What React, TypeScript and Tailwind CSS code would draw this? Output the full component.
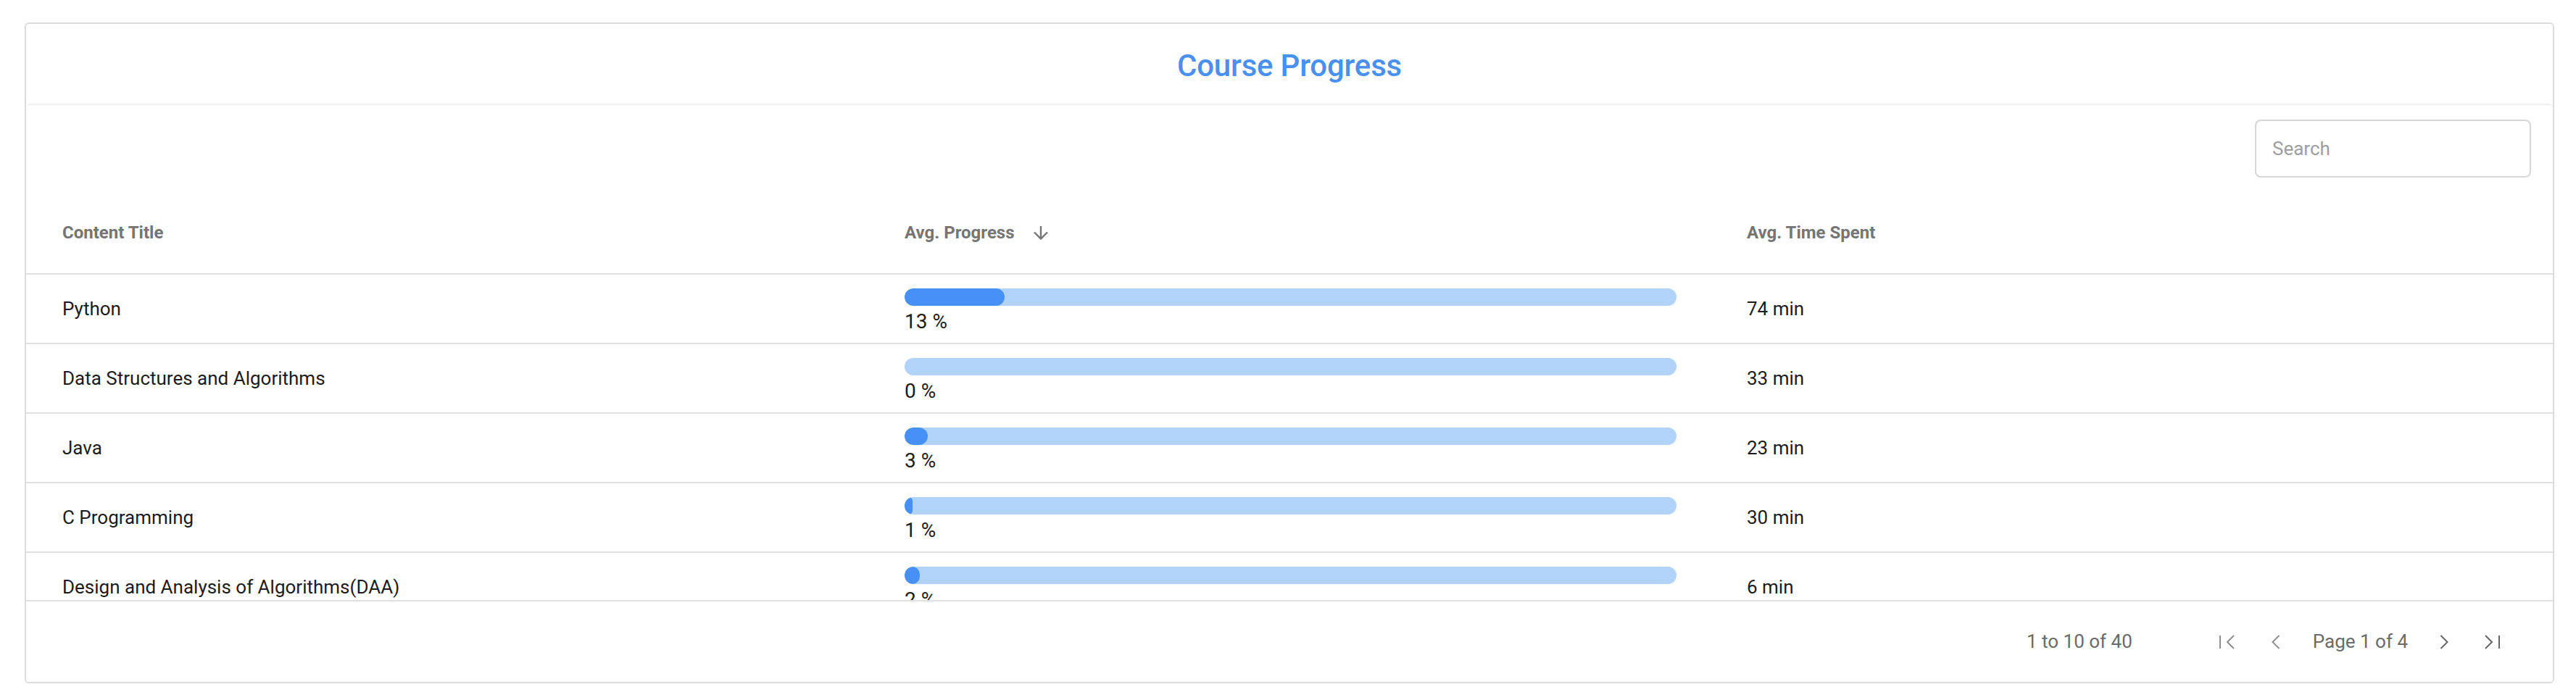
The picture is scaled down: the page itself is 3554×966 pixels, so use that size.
import React from "react";

interface CourseRow {
  title: string;
  progress: number;
  time: string;
}

const rows: CourseRow[] = [
  { title: "Python", progress: 13, time: "74 min" },
  { title: "Data Structures and Algorithms", progress: 0, time: "33 min" },
  { title: "Java", progress: 3, time: "23 min" },
  { title: "C Programming", progress: 1, time: "30 min" },
  { title: "Design and Analysis of Algorithms(DAA)", progress: 2, time: "6 min" },
];

function SortDownIcon() {
  return (
    <svg width="24" height="20" viewBox="0 0 24 20" fill="none" stroke="#757575" strokeWidth="2.4">
      <path d="M12 1v17" />
      <path d="M3 9.5l9 9 9-9" />
    </svg>
  );
}

function PagerIcon({ kind }: { kind: "first" | "prev" | "next" | "last" }) {
  const color = kind === "first" || kind === "prev" ? "#8f8f8f" : "#666666";
  return (
    <svg width="24" height="24" viewBox="0 0 24 24" fill="none" stroke={color} strokeWidth="2">
      {kind === "first" && (
        <>
          <path d="M2 3v18" />
          <path d="M21 3l-9 9 9 9" />
        </>
      )}
      {kind === "prev" && <path d="M16.5 3l-9 9 9 9" />}
      {kind === "next" && <path d="M7.5 3l9 9-9 9" />}
      {kind === "last" && (
        <>
          <path d="M3 3l9 9-9 9" />
          <path d="M22 3v18" />
        </>
      )}
    </svg>
  );
}

function ProgressCell({ value }: { value: number }) {
  return (
    <div className="flex flex-col pt-[19px] pl-[50px] pr-[47px] h-full">
      <div className="h-[24px] w-full rounded-full bg-[#b1d3f9] overflow-hidden">
        <div className="h-full rounded-full bg-[#4690f7]" style={{ width: `${value}%` }} />
      </div>
      <span className="mt-[6px] text-[28px] leading-[32px] text-[#1c1c1c]">{value} %</span>
    </div>
  );
}

export default function App() {
  return (
    <div className="bg-white min-h-screen pt-[31px] pl-[34px] pr-[30px] font-['Roboto',sans-serif]">
      <div className="h-[912px] flex flex-col border-2 border-[#dcdce0] rounded-[6px] bg-white overflow-hidden">
        <div className="h-[110px] flex items-center justify-center pt-[5px]">
          <h1 className="text-[42px] font-medium text-[#4a90f2] tracking-[-0.2px]">Course Progress</h1>
        </div>

        <div className="flex-1 flex flex-col border-t-2 border-[#efefef] rounded-t-[6px]">
          <div className="flex justify-end pt-[20px] pb-[20px] pr-[30px]">
            <input
              placeholder="Search"
              className="w-[381px] h-[80px] rounded-[8px] border-2 border-[#d6d6d6] pl-[22px] text-[26px] text-[#333] placeholder:text-[#9e9e9e] outline-none"
            />
          </div>

          <div className="grid grid-cols-3 h-[114px] border-b-2 border-[#e0e0e0] text-[24px] font-bold text-[#757575]">
            <div className="flex items-center pl-[50px]">Content Title</div>
            <div className="flex items-center pl-[50px] gap-[24px]">
              <span>Avg. Progress</span>
              <SortDownIcon />
            </div>
            <div className="flex items-center pl-[50px]">Avg. Time Spent</div>
          </div>

          <div className="h-[449px] overflow-hidden">
            {rows.map((r) => (
              <div key={r.title} className="grid grid-cols-3 h-[96px] border-b-2 border-[#e0e0e0] text-[26px] text-[#1c1c1c]">
                <div className="flex items-center pl-[50px]">{r.title}</div>
                <ProgressCell value={r.progress} />
                <div className="flex items-center pl-[50px]">{r.time}</div>
              </div>
            ))}
          </div>

          <div className="flex-1 flex items-center justify-end border-t-2 border-[#e0e0e0] bg-white pr-[72px] text-[26px] text-[#6b6b6b]">
            <span>1 to 10 of 40</span>
            <div className="ml-[119px] flex items-center">
              <PagerIcon kind="first" />
            </div>
            <div className="ml-[43px] flex items-center">
              <PagerIcon kind="prev" />
            </div>
            <span className="ml-[39px]">Page 1 of 4</span>
            <div className="ml-[38px] flex items-center">
              <PagerIcon kind="next" />
            </div>
            <div className="ml-[42px] flex items-center">
              <PagerIcon kind="last" />
            </div>
          </div>
        </div>
      </div>
    </div>
  );
}
